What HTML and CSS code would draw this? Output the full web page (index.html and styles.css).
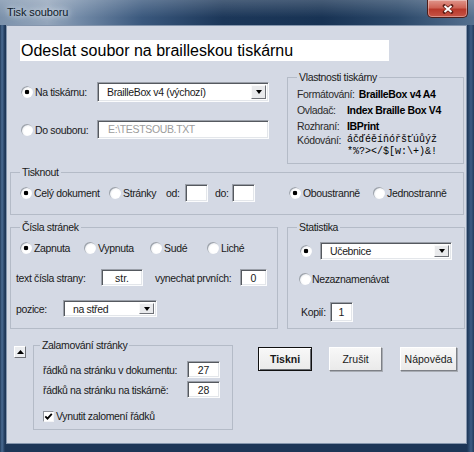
FILE: index.html
```html
<!DOCTYPE html>
<html lang="cs">
<head>
    <meta charset="UTF-8">
    <title>Tisk souboru</title>
    <link rel="stylesheet" href="styles.css">
</head>
<body>
    <div class="window">
        <div class="titlebar">
            <span class="title">Tisk souboru</span>
            <button class="close-btn" aria-label="Zavřít">
                <svg width="12" height="10" viewBox="0 0 12 10">
                    <path d="M2.5 2L9.5 8M9.5 2L2.5 8" stroke="#5a1a12" stroke-width="3.6" stroke-linecap="round"/>
                    <path d="M2.5 2L9.5 8M9.5 2L2.5 8" stroke="#fff" stroke-width="2"/>
                </svg>
            </button>
        </div>

        <div class="client">
            <div class="heading">Odeslat soubor na brailleskou tiskárnu</div>

            <!-- Target + printer properties -->
            <div class="row row-top">
                <div class="target">
                    <div class="line">
                        <input type="radio" class="radio" name="target" checked>
                        <span class="target-label">Na tiskárnu:</span>
                        <div class="field combo combo-printer">
                            <span class="combo-text">BrailleBox v4 (výchozí)</span>
                            <span class="combo-btn"><span class="arrow"></span></span>
                        </div>
                    </div>
                    <div class="line line-file">
                        <input type="radio" class="radio" name="target">
                        <span class="target-label">Do souboru:</span>
                        <div class="field field-file">E:\TESTSOUB.TXT</div>
                    </div>
                </div>

                <fieldset class="group group-props">
                    <legend>Vlastnosti tiskárny</legend>
                    <div class="prop"><span class="prop-name">Formátování:</span><span class="prop-value">BrailleBox v4 A4</span></div>
                    <div class="prop"><span class="prop-name">Ovladač:</span><span class="prop-value">Index Braille Box V4</span></div>
                    <div class="prop"><span class="prop-name">Rozhraní:</span><span class="prop-value">IBPrint</span></div>
                    <div class="prop prop-code"><span class="prop-name">Kódování:</span><span class="code">áčďéěíňóřšťúůýž<br>*%?&gt;&lt;/$[w:\+)&amp;!</span></div>
                </fieldset>
            </div>

            <!-- Print range -->
            <fieldset class="group group-print">
                <legend>Tisknout</legend>
                <div class="opts">
                    <label class="opt opt-whole"><input type="radio" class="radio" name="range" checked>Celý dokument</label>
                    <label class="opt opt-pages"><input type="radio" class="radio" name="range">Stránky</label>
                    <span class="lbl-from">od:</span>
                    <input type="text" class="field num num-from">
                    <span class="lbl-to">do:</span>
                    <input type="text" class="field num">
                    <label class="opt opt-duplex"><input type="radio" class="radio" name="sides" checked>Oboustranně</label>
                    <label class="opt"><input type="radio" class="radio" name="sides">Jednostranně</label>
                </div>
            </fieldset>

            <div class="row row-mid">
                <fieldset class="group group-pages">
                    <legend>Čísla stránek</legend>
                    <div class="opts opts-pages">
                        <label class="opt opt-on"><input type="radio" class="radio" name="numbers" checked>Zapnuta</label>
                        <label class="opt opt-off"><input type="radio" class="radio" name="numbers">Vypnuta</label>
                        <label class="opt opt-even"><input type="radio" class="radio" name="numbers">Sudé</label>
                        <label class="opt"><input type="radio" class="radio" name="numbers">Liché</label>
                    </div>
                    <div class="pages-row pages-text">
                        <span class="lbl-prefix">text čísla strany:</span>
                        <input type="text" class="field field-prefix" value="str.">
                        <span class="lbl-skip">vynechat prvních:</span>
                        <input type="text" class="field field-skip" value="0">
                    </div>
                    <div class="pages-row pages-pos">
                        <span class="lbl-pos">pozice:</span>
                        <div class="field combo combo-pos">
                            <span class="combo-text">na střed</span>
                            <span class="combo-btn"><span class="arrow"></span></span>
                        </div>
                    </div>
                </fieldset>

                <fieldset class="group group-stats">
                    <legend>Statistika</legend>
                    <div class="stats-row stats-kind">
                        <input type="radio" class="radio" name="stats" checked>
                        <div class="field combo combo-stats">
                            <span class="combo-text">Učebnice</span>
                            <span class="combo-btn"><span class="arrow"></span></span>
                        </div>
                    </div>
                    <label class="stats-row stats-none"><input type="radio" class="radio" name="stats">Nezaznamenávat</label>
                    <div class="stats-row stats-copies">
                        <span class="lbl-copies">Kopií:</span>
                        <input type="text" class="field field-copies" value="1">
                    </div>
                </fieldset>
            </div>

            <div class="row row-bottom">
                <button class="collapse-btn" aria-label="Sbalit">
                    <svg width="7" height="4" viewBox="0 0 7 4"><path d="M0 4L3.5 0L7 4Z" fill="#000"/></svg>
                </button>

                <fieldset class="group group-wrap">
                    <legend>Zalamování stránky</legend>
                    <div class="wrap-row">
                        <span class="wrap-label">řádků na stránku v dokumentu:</span>
                        <input type="text" class="field field-lines" value="27">
                    </div>
                    <div class="wrap-row">
                        <span class="wrap-label">řádků na stránku na tiskárně:</span>
                        <input type="text" class="field field-lines" value="28">
                    </div>
                    <label class="wrap-row wrap-check">
                        <span class="check">
                            <svg width="9" height="9" viewBox="0 0 9 9"><path d="M1.3 4.3L3.5 6.7L7.8 1.8" fill="none" stroke="#000" stroke-width="1.8"/></svg>
                        </span>
                        Vynutit zalomení řádků
                    </label>
                </fieldset>

                <div class="actions">
                    <button class="btn btn-default">Tiskni</button>
                    <button class="btn btn-cancel">Zrušit</button>
                    <button class="btn btn-help">Nápověda</button>
                </div>
            </div>
        </div>
    </div>
</body>
</html>
```

FILE: styles.css
```css
* {
    margin: 0;
    padding: 0;
    box-sizing: border-box;
}

body {
    width: 474px;
    height: 452px;
    overflow: hidden;
    font-family: "Liberation Sans", Arial, sans-serif;
    font-size: 10.5px;
    letter-spacing: -0.35px;
    color: #1a1a1a;
    background: #1a3150;
}

.window {
    width: 474px;
    height: 452px;
    display: flex;
    flex-direction: column;
    background: linear-gradient(90deg, #223c5c 0, #4a6b92 2px, #1d3657 5px, #1d3657 467px, #3c5d84 471px, #223c5c 474px);
}

/* Title bar */

.titlebar {
    height: 25px;
    display: flex;
    justify-content: space-between;
    align-items: flex-start;
    padding-left: 7px;
    background:
        linear-gradient(180deg, rgba(255,255,255,0.2), rgba(255,255,255,0) 70%),
        linear-gradient(90deg, #7b91ab 0%, #93a5bb 10%, #7189a6 17%, #3a587d 30%, #1c3759 47%, #183354 68%, #2b4869 84%, #55708f 100%);
}

.title {
    line-height: 25px;
    font-size: 11px;
    letter-spacing: -0.1px;
    color: #0f1a28;
    text-shadow: 0 0 5px #dbe3ec, 0 0 8px #dbe3ec;
}

.close-btn {
    width: 41px;
    height: 18px;
    margin-right: 6px;
    display: flex;
    align-items: center;
    justify-content: center;
    border: 1px solid #4d1d19;
    border-top: none;
    border-radius: 0 0 5px 5px;
    background: linear-gradient(180deg, #e0968b 0%, #cf6456 45%, #b8392b 55%, #c75446 100%);
    box-shadow: inset 0 0 0 1px rgba(255,255,255,0.35);
}

/* Client area */

.client {
    margin: 0 7px 0 6px;
    height: 419px;
    padding: 14px 0 0 3px;
    background: #d4d9e4;
    border: 1px solid #8596ad;
}

.heading {
    width: 369px;
    height: 21px;
    margin-left: 10px;
    padding-left: 1px;
    background: #fff;
    color: #000;
    font-size: 16px;
    line-height: 21px;
    letter-spacing: 0;
}

.row {
    display: flex;
    align-items: flex-start;
}

/* Group boxes */

.group {
    border: 1px solid #b4bbc7;
    min-width: 0;
}

.group legend {
    padding: 0 2px;
    font-size: 10.5px;
    line-height: 12px;
}

/* Controls */

.radio {
    appearance: none;
    flex: none;
    width: 12px;
    height: 12px;
    border-radius: 50%;
    border: none;
    background: radial-gradient(circle at 60% 60%, #fff 40%, #e4e7ec 70%, #a9aeb7 100%);
    box-shadow: inset 1px 1px 0 #9ca2ab;
}

.radio:checked {
    background:
        radial-gradient(circle at 50% 50%, #000 0 2px, transparent 2.6px),
        radial-gradient(circle at 60% 60%, #fff 40%, #e4e7ec 70%, #a9aeb7 100%);
}

.field {
    display: block;
    flex: none;
    background: #fff;
    border: 1px solid;
    border-color: #9a9fa8 #fbfcfd #fbfcfd #9a9fa8;
    box-shadow: inset 1px 1px 0 #55595f, inset -1px -1px 0 #e3e6ea;
    font: inherit;
    color: #1a1a1a;
    text-align: center;
    outline: none;
}

.combo {
    display: flex;
    align-items: center;
    padding: 2px 2px 2px 9px;
    text-align: left;
}

.combo-text {
    flex: 1;
}

.combo-btn {
    width: 15px;
    height: 100%;
    display: flex;
    align-items: center;
    justify-content: center;
    background: #e9eaec;
    border: 1px solid;
    border-color: #fafafa #6f7278 #6f7278 #fafafa;
}

.arrow {
    width: 0;
    height: 0;
    border-left: 3.5px solid transparent;
    border-right: 3.5px solid transparent;
    border-top: 4px solid #000;
}

.opts {
    display: flex;
    align-items: center;
    height: 18px;
}

.opt {
    display: flex;
    align-items: center;
}

.opt .radio {
    margin-right: 2px;
}

/* Target */

.row-top {
    margin-top: 10px;
}

.target {
    width: 277px;
    padding-top: 11px;
}

.line {
    display: flex;
    align-items: center;
    height: 20px;
}

.line .radio {
    margin-left: 11px;
}

.line-file {
    margin-top: 18px;
    height: 19px;
}

.target-label {
    width: 62px;
    margin-left: 2px;
}

.combo-printer {
    width: 172px;
    height: 20px;
}

.field-file {
    width: 172px;
    height: 19px;
    padding-left: 10px;
    line-height: 17px;
    text-align: left;
    color: #9c9c9c;
}

/* Printer properties */

.group-props {
    width: 177px;
    height: 93px;
    padding: 3px 0 0 9px;
}

.prop {
    display: flex;
    line-height: 16px;
}

.prop-name {
    min-width: 46px;
    margin-right: 4px;
    color: #2a2a2a;
}

.prop-value {
    font-weight: bold;
    color: #000;
}

.prop-code {
    line-height: 12px;
}

.code {
    font-family: "Liberation Mono", "DejaVu Sans Mono", monospace;
    font-size: 10px;
    letter-spacing: 0;
    color: #000;
}

/* Print range */

.group-print {
    width: 454px;
    height: 49px;
    margin-top: 2px;
    padding: 6px 0 0 9px;
}

.opt-whole { width: 89px; }
.opt-pages { width: 57px; }
.lbl-from { width: 19px; }
.lbl-to { width: 17px; }

.num {
    width: 23px;
    height: 18px;
}

.num-from {
    margin-right: 7px;
}

.opt-duplex {
    width: 84px;
    margin-left: 34px;
}

/* Page numbers */

.row-mid {
    margin-top: 6px;
    gap: 9px;
}

.group-pages {
    width: 268px;
    height: 108px;
    padding: 7px 0 0 9px;
}

.opts-pages {
    height: 16px;
}

.opt-on { width: 64px; }
.opt-off { width: 66px; }
.opt-even { width: 57px; }

.pages-row {
    display: flex;
    align-items: center;
    height: 17px;
    margin-left: -4px;
}

.pages-text {
    margin-top: 13px;
}

.pages-pos {
    margin-top: 14px;
}

.lbl-prefix { width: 85px; }

.field-prefix {
    width: 42px;
    height: 17px;
}

.lbl-skip {
    width: 85px;
    margin-left: 12px;
}

.field-skip {
    width: 27px;
    height: 17px;
}

.lbl-pos { width: 47px; }

.combo-pos {
    width: 94px;
    height: 17px;
}

/* Statistics */

.group-stats {
    width: 178px;
    height: 108px;
    padding: 9px 0 0 9px;
}

.stats-row {
    display: flex;
    align-items: center;
}

.stats-kind {
    height: 18px;
}

.stats-kind .radio {
    margin-left: 3px;
}

.combo-stats {
    width: 132px;
    height: 18px;
    margin-left: 8px;
}

.stats-none {
    height: 14px;
    margin-top: 12px;
}

.stats-none .radio {
    margin: 0 1px 0 2px;
}

.stats-copies {
    height: 20px;
    margin-top: 16px;
}

.lbl-copies {
    width: 29px;
    margin-left: 4px;
}

.field-copies {
    width: 23px;
    height: 20px;
}

/* Page wrapping + buttons */

.row-bottom {
    margin-top: 10px;
}

.collapse-btn {
    width: 12px;
    height: 12px;
    margin: 7px 0 0 4px;
    display: flex;
    align-items: center;
    justify-content: center;
    background: #eceef1;
    border: 1px solid;
    border-color: #fff #6f7278 #6f7278 #fff;
}

.group-wrap {
    width: 200px;
    height: 91px;
    margin-left: 7px;
    padding: 10px 0 0 9px;
}

.group-wrap legend {
    margin-left: -3px;
}

.wrap-row {
    display: flex;
    align-items: center;
    height: 17px;
}

.wrap-row + .wrap-row {
    margin-top: 3px;
}

.wrap-label {
    width: 144px;
}

.field-lines {
    width: 33px;
    height: 17px;
}

.wrap-row.wrap-check {
    height: 12px;
    margin-top: 12px;
}

.check {
    width: 11px;
    height: 11px;
    margin-right: 2px;
    display: flex;
    align-items: center;
    justify-content: center;
    background: #fff;
    border: 1px solid;
    border-color: #8d929a #f4f5f7 #f4f5f7 #8d929a;
}

.actions {
    display: flex;
    margin: 8px 0 0 25px;
}

.btn {
    height: 24px;
    font: inherit;
    color: #1a1a1a;
    background: linear-gradient(180deg, #f8f8f8 0%, #eaeaea 100%);
    border: 1px solid;
    border-color: #fff #7d8086 #7d8086 #fff;
    box-shadow: 1px 1px 0 #a8acb3;
}

.btn-default {
    width: 54px;
    font-weight: bold;
    border: 1px solid #111;
    box-shadow: inset 1px 1px 0 #fff, inset -1px -1px 0 #6a6d72;
}

.btn-cancel {
    width: 53px;
    margin-left: 17px;
}

.btn-help {
    width: 57px;
    margin-left: 18px;
}
```
